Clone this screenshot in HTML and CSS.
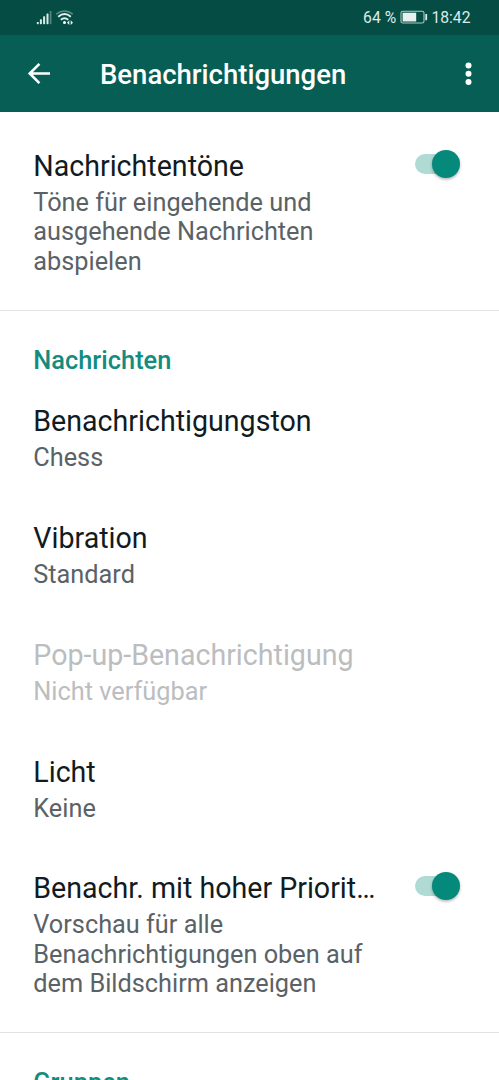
FILE: index.html
```
<!DOCTYPE html>
<html lang="de">
<head>
<meta charset="utf-8">
<title>Benachrichtigungen</title>
<link rel="stylesheet" href="styles.css">
</head>
<body>
<div class="status">
  <svg class="signals" width="40" height="18" viewBox="0 0 40 18">
    <g fill="#d9ebe7">
      <rect x="0.8" y="13" width="2" height="2.2" rx=".6"/>
      <rect x="3.9" y="10.2" width="2" height="5" rx=".6"/>
      <rect x="7.1" y="7.2" width="2" height="8" rx=".6"/>
      <rect x="10.5" y="4.5" width="2" height="10.7" rx=".6"/>
      <rect x="13.7" y="2" width="1.8" height="13.2" rx=".6" opacity=".35"/>
    </g>
    <g fill="none" stroke="#e3f1ee" stroke-width="1.8">
      <path d="M20.2 5.2Q28.6 -1 36.7 5.2" opacity=".4" stroke-width="1.5"/>
      <path d="M22.2 7.7Q28.5 2.4 34.8 7.7"/>
      <path d="M24.8 10.7Q28.5 7.7 32.2 10.7"/>
    </g>
    <circle cx="28.5" cy="13.5" r="1.5" fill="#fff"/>
    <path d="M33.3 11.3L31 13.7L33.3 16ZM34.7 11.3L37 13.7L34.7 16Z" fill="#e3f1ee"/>
  </svg>
  <div class="status-right">
    <span class="percent">64 %</span>
    <svg class="battery" width="28" height="14" viewBox="0 0 28 14">
      <rect x="1" y="1.2" width="23" height="11.8" rx="1.8" fill="none" stroke="#a9c9c2" stroke-width="1.1"/>
      <rect x="2.6" y="2.7" width="13.6" height="8.8" fill="#e6f1ef"/>
      <rect x="25.3" y="3.9" width="1.8" height="6.4" rx=".5" fill="#d9ebe7"/>
    </svg>
    <span class="clock">18:42</span>
  </div>
</div>
<header class="bar">
  <svg class="back" width="24" height="24" viewBox="0 0 24 24" fill="none" stroke="#fff" stroke-width="2.6"><path d="M23 11.5H3M12.4 1.8L2.7 11.5L12.4 21.2"/></svg>
  <h1 class="heading">Benachrichtigungen</h1>
  <svg class="more" width="8" height="24" viewBox="0 0 8 24" fill="#fff"><circle cx="4.5" cy="3.5" r="3"/><circle cx="4.5" cy="11.8" r="3"/><circle cx="4.5" cy="20.1" r="3"/></svg>
</header>
<main>
  <section class="group sounds">
    <div class="row">
      <div class="copy"><div class="title">Nachrichtentöne</div><div class="summary">Töne für eingehende und ausgehende Nachrichten abspielen</div></div>
      <div class="switch"><div class="track"></div><div class="knob"></div></div>
    </div>
  </section>
  <section class="group messages">
    <h2 class="label">Nachrichten</h2>
    <div class="row"><div class="copy"><div class="title">Benachrichtigungston</div><div class="summary">Chess</div></div></div>
    <div class="row"><div class="copy"><div class="title">Vibration</div><div class="summary">Standard</div></div></div>
    <div class="row disabled"><div class="copy"><div class="title">Pop-up-Benachrichtigung</div><div class="summary">Nicht verfügbar</div></div></div>
    <div class="row"><div class="copy"><div class="title">Licht</div><div class="summary">Keine</div></div></div>
    <div class="row">
      <div class="copy"><div class="title">Benachr. mit hoher Priorit…</div><div class="summary">Vorschau für alle Benachrichtigungen oben auf dem Bildschirm anzeigen</div></div>
      <div class="switch"><div class="track"></div><div class="knob"></div></div>
    </div>
  </section>
  <section class="group">
    <h2 class="label">Gruppen</h2>
  </section>
</main>
</body>
</html>
```
FILE: styles.css
```
* { box-sizing: border-box; }
body {
  margin: 0;
  height: 1080px;
  overflow: hidden;
  display: flex;
  flex-direction: column;
  background: #fff;
  font-family: Roboto, "Liberation Sans", sans-serif;
}
.status {
  flex: none;
  height: 35px;
  padding: 0 28.5px 0 36px;
  display: flex;
  align-items: center;
  justify-content: space-between;
  background: #054d44;
  color: #dcebe8;
  font-size: 15.7px;
}
.status-right { display: flex; align-items: center; }
.percent { margin-right: 4px; }
.battery { margin-bottom: 1px; }
.clock { margin-left: 3.3px; }
.bar {
  flex: none;
  height: 77px;
  padding: 0 27px;
  display: flex;
  align-items: center;
  background: #075e54;
}
.heading {
  flex: 1;
  margin: 2px 0 0 49px;
  color: #fff;
  font-size: 27.5px;
  font-weight: 500;
  line-height: 34px;
}
main { flex: 1; min-height: 0; overflow: hidden; }
.group { border-bottom: 1px solid #e0e2e3; }
.sounds { padding: 12.5px 0 10px; }
.messages { padding-bottom: 9.5px; }
.row {
  display: flex;
  justify-content: space-between;
  padding: 24.2px 39px 24.2px 33.3px;
}
.copy { width: 345px; }
.title {
  color: #111b21;
  font-size: 28.6px;
  line-height: 35.4px;
  white-space: nowrap;
}
.summary {
  margin-top: 3.6px;
  color: #5b6266;
  font-size: 25.3px;
  line-height: 29.4px;
}
.disabled .title, .disabled .summary { color: #bbbdbf; }
.label {
  margin: 0;
  padding: 34px 33.3px 5px;
  color: #128c7e;
  font-size: 25.4px;
  font-weight: 500;
  line-height: 30px;
}
.switch {
  flex: none;
  width: 45px;
  height: 28px;
  margin-top: 1px;
  display: flex;
  align-items: center;
}
.track {
  width: 36px;
  height: 20px;
  margin-right: -19px;
  border-radius: 10px;
  background: #b0dad4;
}
.knob {
  width: 28px;
  height: 28px;
  border-radius: 50%;
  background: #05897b;
  box-shadow: 0 1.5px 3px rgba(0, 0, 0, .3);
}
```
